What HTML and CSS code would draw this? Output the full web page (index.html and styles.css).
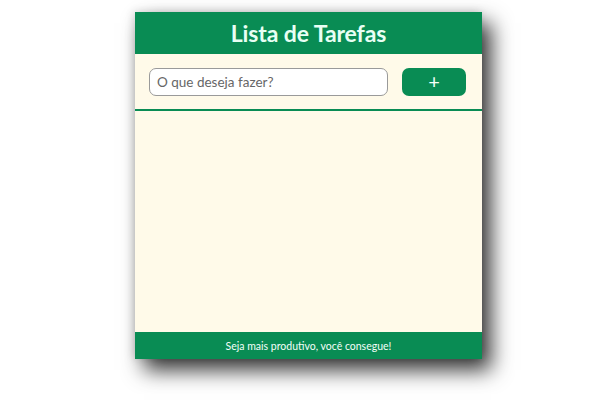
FILE: index.html
```html
<!DOCTYPE html>
<html lang="pt-BR">
<head>
<meta charset="utf-8">
<title>Lista de Tarefas</title>
<link rel="stylesheet" href="styles.css">
</head>
<body>
<div class="app">
  <header class="app-header"><h1 class="title">Lista de Tarefas</h1></header>
  <form class="task-form">
    <input class="task-input" type="text" placeholder="O que deseja fazer?">
    <button class="add-btn" type="button">+</button>
  </form>
  <ul class="task-list"></ul>
  <footer class="app-footer">Seja mais produtivo, você consegue!</footer>
</div>
</body>
</html>
```
FILE: styles.css
```css
* { box-sizing: border-box; }
html, body { margin: 0; padding: 0; background: #ffffff; }
body { font-family: "Lato", "Open Sans", sans-serif; padding: 12px 0 41px; }
.app {
  width: 347px;
  margin: 0 0 0 135px;
  height: 347px;
  display: flex;
  flex-direction: column;
  background: #fffae9;
  box-shadow: 9px 11px 20px rgba(0,0,0,0.8), -2px -1px 8px rgba(0,0,0,0.12);
}
.app-header {
  height: 42px;
  background: #098c54;
  display: flex;
  align-items: center;
  justify-content: center;
}
.title {
  margin: 0;
  font-size: 23px;
  font-weight: 700;
  color: #e8fff4;
  letter-spacing: -0.1px;
}
.task-form {
  display: flex;
  align-items: center;
  gap: 14px;
  padding: 0 16px 0 14px;
  height: 57px;
  border-bottom: 2px solid #098c54;
}
.task-input {
  width: 239px;
  height: 28px;
  border: 1px solid #9a9a9a;
  border-radius: 7px;
  background: #fff;
  padding: 0 7px;
  font-family: "Lato", sans-serif;
  font-size: 13.5px;
  color: #444;
  margin-top: 1px;
}
.task-input::placeholder { color: #666; }
.add-btn {
  width: 64px;
  height: 28px;
  border: none;
  border-radius: 7px;
  background: #098c54;
  color: #f4fff9;
  font-family: "Lato", sans-serif;
  font-size: 20px;
  line-height: 1;
  padding: 0 0 2px;
  margin-top: 1px;
}
.task-list {
  flex: 1;
  margin: 0;
  padding: 0;
  list-style: none;
}
.app-footer {
  height: 27px;
  background: #098c54;
  color: #f4fff9;
  font-size: 10.5px;
  display: flex;
  align-items: center;
  justify-content: center;
}
```
